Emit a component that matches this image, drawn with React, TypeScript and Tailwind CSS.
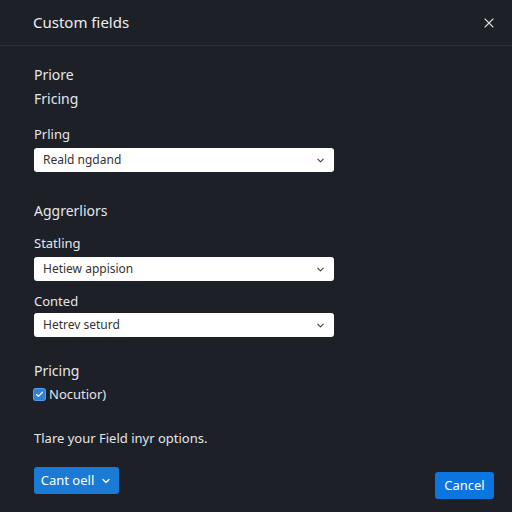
import { ChevronDown, X, Check } from 'lucide-react'

function Select({ value }: { value: string }) {
  return (
    <div className="flex h-[24px] w-[300px] items-center justify-between rounded-[3px] bg-white pl-[9px] pr-[8px] text-[12px] text-[#333]">
      <span>{value}</span>
      <ChevronDown size={11} strokeWidth={2.5} className="text-[#444]" />
    </div>
  )
}

export default function App() {
  return (
    <div className="flex h-[512px] w-[512px] flex-col bg-[#1d2027] text-[#e4e6ea]" style={{ fontFamily: '"Noto Sans", "Open Sans", sans-serif' }}>
      <div className="flex h-[46px] items-center justify-between border-b border-[#2a2e36] pl-[33px] pr-[15px]">
        <span className="text-[15px] text-[#eceef2]">Custom fields</span>
        <X size={16} strokeWidth={1.6} className="text-[#d8dbe0]" />
      </div>
      <div className="flex flex-1 flex-col px-[34px]">
        <div className="mt-[18px] text-[14px] leading-[22px]">Priore</div>
        <div className="mt-[2px] text-[14px] leading-[22px]">Fricing</div>
        <div className="mt-[15px] text-[13px] leading-[18px]">Prling</div>
        <div className="mt-[5px]"><Select value="Reald ngdand" /></div>
        <div className="mt-[28px] text-[14px] leading-[22px]">Aggrerliors</div>
        <div className="mt-[12px] text-[13px] leading-[18px]">Statling</div>
        <div className="mt-[5px]"><Select value="Hetiew appision" /></div>
        <div className="mt-[11px] text-[13px] leading-[18px]">Conted</div>
        <div className="mt-[3px]"><Select value="Hetrev seturd" /></div>
        <div className="mt-[23px] text-[14px] leading-[22px]">Pricing</div>
        <div className="mt-[2px] flex items-center gap-[4px] text-[13px] leading-[20px]">
          <span className="flex h-[11px] w-[11px] items-center justify-center rounded-[2px] bg-[#2f7fd8] ring-1 ring-[#5a9ae6]">
            <Check size={9} strokeWidth={3} className="text-white" />
          </span>
          <span>Nocutior)</span>
        </div>
        <div className="mt-[24px] text-[13px] leading-[20px]">Tlare your Field inyr options.</div>
        <div className="mt-auto mb-[13px] flex items-end justify-between">
          <div className="mb-[5px] flex h-[27px] w-[85px] items-center justify-center gap-[6px] rounded-[3px] bg-[#1a7ad6] text-[13px] text-white">
            <span>Cant oell</span>
            <ChevronDown size={12} strokeWidth={2.5} />
          </div>
          <div className="mr-[-16px] flex h-[27px] w-[59px] items-center justify-center rounded-[3px] bg-[#0b76e0] text-[13px] text-white">
            Cancel
          </div>
        </div>
      </div>
    </div>
  )
}
